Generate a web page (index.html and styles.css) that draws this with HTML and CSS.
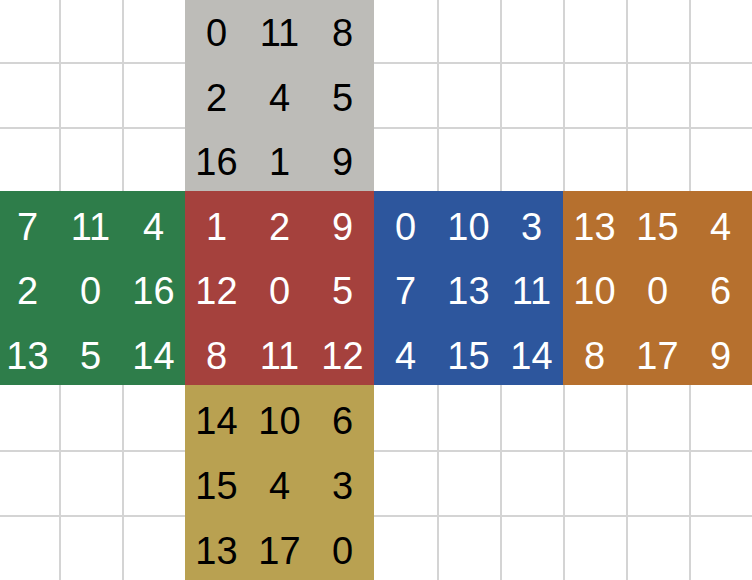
FILE: index.html
```html
<!DOCTYPE html>
<html>
<head>
<meta charset="utf-8">
<link rel="stylesheet" href="styles.css">
</head>
<body>
<div class="sheet">
  <div class="c nl nt"></div><div class="c nt"></div><div class="c nt"></div>
  <div class="f top">0</div><div class="f top">11</div><div class="f top">8</div>
  <div class="c nl nt"></div><div class="c nt"></div><div class="c nt"></div><div class="c nt"></div><div class="c nt"></div><div class="c nt"></div>

  <div class="c nl"></div><div class="c"></div><div class="c"></div>
  <div class="f top">2</div><div class="f top">4</div><div class="f top">5</div>
  <div class="c nl"></div><div class="c"></div><div class="c"></div><div class="c"></div><div class="c"></div><div class="c"></div>

  <div class="c nl"></div><div class="c"></div><div class="c"></div>
  <div class="f top">16</div><div class="f top">1</div><div class="f top">9</div>
  <div class="c nl"></div><div class="c"></div><div class="c"></div><div class="c"></div><div class="c"></div><div class="c"></div>

  <div class="f green first">7</div><div class="f green">11</div><div class="f green">4</div>
  <div class="f red">1</div><div class="f red">2</div><div class="f red">9</div>
  <div class="f blue">0</div><div class="f blue">10</div><div class="f blue">3</div>
  <div class="f orange">13</div><div class="f orange">15</div><div class="f orange">4</div>

  <div class="f green first">2</div><div class="f green">0</div><div class="f green">16</div>
  <div class="f red">12</div><div class="f red">0</div><div class="f red">5</div>
  <div class="f blue">7</div><div class="f blue">13</div><div class="f blue">11</div>
  <div class="f orange">10</div><div class="f orange">0</div><div class="f orange">6</div>

  <div class="f green first">13</div><div class="f green">5</div><div class="f green">14</div>
  <div class="f red">8</div><div class="f red">11</div><div class="f red">12</div>
  <div class="f blue">4</div><div class="f blue">15</div><div class="f blue">14</div>
  <div class="f orange">8</div><div class="f orange">17</div><div class="f orange">9</div>

  <div class="c nl nt"></div><div class="c nt"></div><div class="c nt"></div>
  <div class="f yellow">14</div><div class="f yellow">10</div><div class="f yellow">6</div>
  <div class="c nl nt"></div><div class="c nt"></div><div class="c nt"></div><div class="c nt"></div><div class="c nt"></div><div class="c nt"></div>

  <div class="c nl"></div><div class="c"></div><div class="c"></div>
  <div class="f yellow">15</div><div class="f yellow">4</div><div class="f yellow">3</div>
  <div class="c nl"></div><div class="c"></div><div class="c"></div><div class="c"></div><div class="c"></div><div class="c"></div>

  <div class="c nl"></div><div class="c"></div><div class="c"></div>
  <div class="f yellow">13</div><div class="f yellow">17</div><div class="f yellow">0</div>
  <div class="c nl"></div><div class="c"></div><div class="c"></div><div class="c"></div><div class="c"></div><div class="c"></div>
</div>
</body>
</html>
```
FILE: styles.css
```css
html, body {
  margin: 0;
  padding: 0;
  background: #ffffff;
}
.sheet {
  width: 752px;
  height: 580px;
  display: grid;
  grid-template-columns: 59px repeat(11, 63px);
  grid-template-rows: 62px 65px 64px 65px 64px 65px 65px 65px 65px;
  overflow: hidden;
  font-family: "Liberation Sans", Arial, sans-serif;
  font-size: 38px;
  line-height: 38px;
}
.c {
  box-sizing: border-box;
  background: #ffffff;
  border-left: 2px solid #d4d4d4;
  border-top: 2px solid #d4d4d4;
}
.c.nl { border-left: none; }
.c.nt { border-top: none; }
.f {
  box-sizing: border-box;
  display: flex;
  align-items: flex-end;
  justify-content: center;
  padding-bottom: 10px;
  color: #ffffff;
}
.f.first { padding-right: 4px; }
.top { background: #bdbcb8; color: #000000; }
.yellow { background: #b9a151; color: #000000; }
.green { background: #2e7d4a; }
.red { background: #a5413d; }
.blue { background: #2d569d; }
.orange { background: #b6702e; }
```
